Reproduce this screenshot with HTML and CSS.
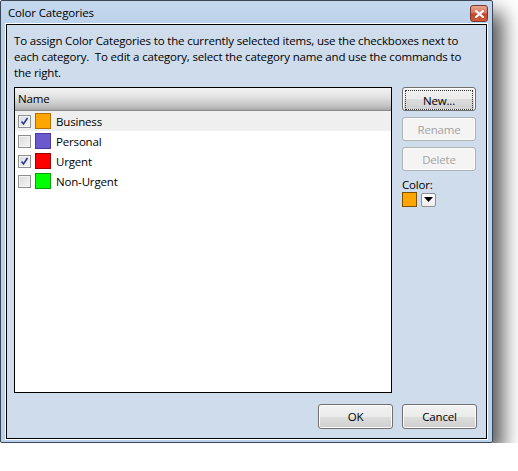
FILE: index.html
```html
<!DOCTYPE html>
<html>
<head>
<meta charset="utf-8">
<link rel="stylesheet" href="styles.css">
</head>
<body>
<div class="window">
  <div class="titlebar">
    <span class="title">Color Categories</span>
    <div class="close"><svg width="9" height="8" viewBox="0 0 9 8"><path d="M1 1 L8 7 M8 1 L1 7" stroke="#fff" stroke-width="2.2" stroke-linecap="square"/></svg></div>
  </div>
  <div class="client">
    <p class="intro">To assign Color Categories to the currently selected items, use the checkboxes next to each category.&nbsp; To edit a category, select the category name and use the commands to the right.</p>
    <div class="main">
      <div class="list">
        <div class="header">Name</div>
        <div class="row selected"><span class="cb checked"><svg width="9" height="9" viewBox="0 0 9 9"><path d="M1.5 4.5 L3.5 7 L7.5 1" fill="none" stroke="#2a3a9a" stroke-width="1.6"/></svg></span><span class="sw" style="background:#ffa500;border-color:#b07000"></span><span class="lbl">Business</span></div>
        <div class="row"><span class="cb"></span><span class="sw" style="background:#6a5acd;border-color:#4a3a9d"></span><span class="lbl">Personal</span></div>
        <div class="row"><span class="cb checked"><svg width="9" height="9" viewBox="0 0 9 9"><path d="M1.5 4.5 L3.5 7 L7.5 1" fill="none" stroke="#2a3a9a" stroke-width="1.6"/></svg></span><span class="sw" style="background:#ff0000;border-color:#a00000"></span><span class="lbl">Urgent</span></div>
        <div class="row"><span class="cb"></span><span class="sw" style="background:#00ff00;border-color:#00a000"></span><span class="lbl">Non-Urgent</span></div>
      </div>
      <div class="side">
        <button class="btn focus"><span>New...</span></button>
        <button class="btn disabled">Rename</button>
        <button class="btn disabled">Delete</button>
        <div class="colorlbl">Color:</div>
        <div class="colorrow">
          <span class="bigsw"></span>
          <span class="drop"><svg width="9" height="5" viewBox="0 0 9 5"><path d="M0 0 H9 L4.5 5 Z" fill="#000"/></svg></span>
        </div>
      </div>
    </div>
    <div class="footer">
      <button class="btn">OK</button>
      <button class="btn">Cancel</button>
    </div>
  </div>
</div>
</body>
</html>
```
FILE: styles.css
```css
html, body {
  margin: 0;
  padding: 0;
  background: #fff;
}
body {
  font-family: "Open Sans", "Noto Sans", sans-serif;
  font-size: 11.5px;
  letter-spacing: -0.17px;
  color: #000;
}
.window {
  width: 481px;
  height: 438px;
  border: 1px solid #3b4656;
  border-radius: 2px;
  background: linear-gradient(#c6d8ee 0, #bcd3ec 22px, #b9d1ea 23px);
  box-shadow: 10px 12px 20px rgba(0,0,0,0.66);
  display: flex;
  flex-direction: column;
  box-sizing: content-box;
  padding: 0 5px 3px 5px;
}
.titlebar {
  height: 22px;
  display: flex;
  align-items: center;
  justify-content: space-between;
  padding-left: 2px;
}
.title {
  line-height: 16px;
  margin-top: 1px;
}
.close {
  width: 18px;
  height: 17px;
  margin-top: 3px;
  margin-right: -1px;
  border: 1px solid #7a3a2a;
  border-radius: 3px;
  background: linear-gradient(#e8a690 0, #d8725a 45%, #c4452a 55%, #d25a3c 100%);
  display: flex;
  align-items: center;
  justify-content: center;
  box-sizing: border-box;
}
.client {
  flex: 1;
  border: 1px solid #000;
  outline: 1px solid #fff;
  background: #cfdcec;
  display: flex;
  flex-direction: column;
  padding: 8px 9px 9px 7px;
  margin-top: 1px;
}
.intro {
  margin: 0;
  line-height: 16px;
  height: 48px;
}
.main {
  display: flex;
  margin-top: 6px;
  gap: 10px;
}
.list {
  width: 376px;
  height: 304px;
  border: 1px solid #000;
  background: #fff;
}
.header {
  height: 23px;
  line-height: 22px;
  padding-left: 3px;
  background: linear-gradient(#f4f4f4 0, #e2e2e2 40%, #c4c4c4 80%, #a8a8a8 100%);
  border-bottom: 1px solid #8a8a8a;
  box-sizing: border-box;
}
.row {
  height: 20px;
  display: flex;
  align-items: center;
  padding-left: 3px;
}
.row.selected {
  background: #efefef;
}
.cb {
  width: 13px;
  height: 13px;
  box-sizing: border-box;
  border: 1px solid #8e8f8f;
  background: linear-gradient(135deg, #dcdcdc, #f6f6f6);
  display: flex;
  align-items: center;
  justify-content: center;
  box-shadow: inset 0 0 0 1px #f4f4f4;
}
.sw {
  width: 16px;
  height: 16px;
  box-sizing: border-box;
  border: 1px solid;
  margin-left: 4px;
}
.lbl {
  margin-left: 5px;
}
.side {
  display: flex;
  flex-direction: column;
  width: 74px;
}
.btn {
  font-family: inherit;
  font-size: inherit;
  letter-spacing: inherit;
  width: 74px;
  height: 24px;
  border: 1px solid #707070;
  border-radius: 3px;
  background: linear-gradient(#f2f2f2 0, #ebebeb 50%, #dddddd 51%, #cfcfcf 100%);
  color: #000;
  padding: 0;
  margin: 0 0 6px 0;
  box-shadow: inset 0 0 0 1px #fcfcfc;
}
.btn.focus span {
  display: flex;
  align-items: center;
  justify-content: center;
  margin: 2px;
  height: 18px;
  border: 1px dotted #333;
}
.btn.disabled {
  color: #a3a3a3;
  border-color: #adb2b5;
  background: #f4f4f4;
}
.colorlbl {
  margin-top: 1px;
  line-height: 14px;
}
.colorrow {
  display: flex;
  align-items: center;
  gap: 4px;
  margin-top: 0;
}
.bigsw {
  width: 15px;
  height: 15px;
  box-sizing: border-box;
  border: 1px solid #7a5000;
  background: #ffa500;
}
.drop {
  width: 15px;
  height: 14px;
  box-sizing: border-box;
  border: 1px solid #8e8f8f;
  border-radius: 2px;
  background: linear-gradient(#ffffff, #ececec);
  display: flex;
  align-items: center;
  justify-content: center;
}
.footer {
  margin-top: auto;
  display: flex;
  justify-content: flex-end;
  gap: 9px;
}
.footer .btn {
  margin: 0;
  width: 75px;
  height: 25px;
}
```
